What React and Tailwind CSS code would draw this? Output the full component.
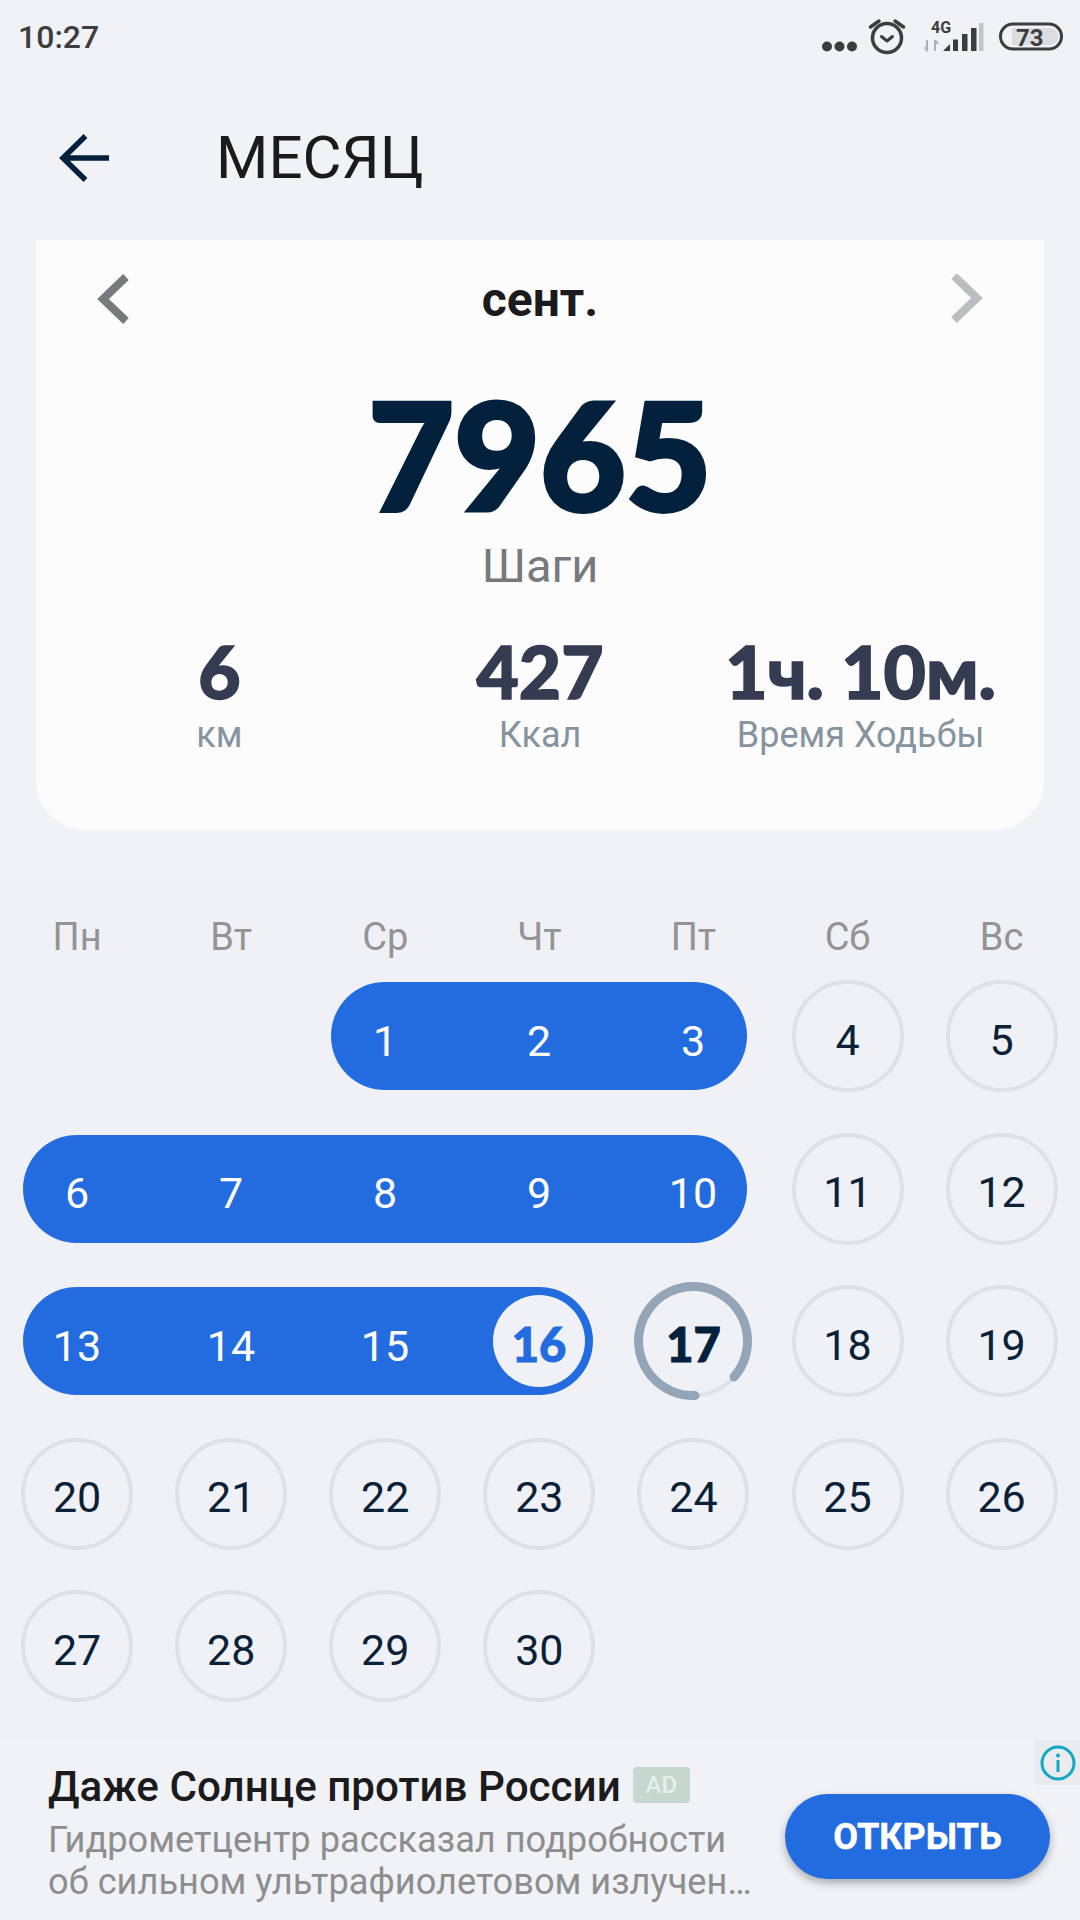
import React from "react";

function Day({ n }) {
  return (
    <div className="flex h-[152.5px] items-center justify-center">
      <div className="flex h-[112px] w-[112px] items-center justify-center rounded-full border-[4px] border-[#dfe1e6] pt-[7px] text-[43px] text-[#0b2138]">
        {n}
      </div>
    </div>
  );
}

function PillDay({ n }) {
  return <div className="flex w-[154px] shrink-0 items-center justify-center pt-[9px] text-[43px] leading-[50px] text-white">{n}</div>;
}

function Spacer() {
  return <div className="h-[152.5px]" />;
}

function PillRow({ span, width, days }) {
  return (
    <div className={"flex h-[152.5px] items-center " + span}>
      <div className={"ml-[23px] flex h-[108px] items-center justify-center rounded-full bg-[#226ce0] " + width}>
        {days.map((n) => (
          <PillDay key={n} n={n} />
        ))}
      </div>
    </div>
  );
}

function StatusIcons() {
  return (
    <svg width="280" height="72" viewBox="800 0 280 72" fill="none">
      <g fill="#3c3d3f">
        <circle cx="827" cy="45.500" r="5" />
        <circle cx="839.500" cy="45.500" r="5" />
        <circle cx="852" cy="45.500" r="5" />
      </g>
      <g stroke="#3c3d3f" fill="none" strokeLinecap="round" strokeLinejoin="round">
        <circle cx="887" cy="37" r="14.500" strokeWidth="3.500" />
        <path d="M881.500 35.500l5.500 4.500 5.500-4.500" strokeWidth="3" />
        <path d="M870.500 26l8.500-6M903.500 26l-8.500-6" strokeWidth="3.500" />
      </g>
      <text x="931" y="32" fontSize="16" fontWeight="700" fill="#3c3d3f" fontFamily="Roboto">4G</text>
      <path d="M927 39v11M925 46l2 4M935 50V39M935 39l3 4" stroke="#aeb0b3" strokeWidth="2" />
      <path d="M943 50l7-7v7z" fill="#3c3d3f" />
      <path d="M953 38.500h5V50h-5z" fill="#3c3d3f" />
      <path d="M962 33h5.500v17H962z" fill="#3c3d3f" />
      <path d="M971 27h5.500v23H971z" fill="#3c3d3f" />
      <path d="M979 22h4.500v28H979z" fill="#c2c4c6" />
      <path d="M1012 27h38a8.500 8.500 0 0 1 0 17h-38z" fill="#dcdde0" />
      <rect x="1000.500" y="23" width="61" height="25" rx="12.500" stroke="#3c3d3f" strokeWidth="3" fill="none" />
      <text x="1016" y="44.500" fontSize="24" fontWeight="700" fill="#3c3d3f" fontFamily="Roboto">73</text>
    </svg>
  );
}

export default function App() {
  return (
    <div className="flex h-[1920px] w-[1080px] flex-col overflow-hidden bg-[#f1f2f6] font-['Roboto',sans-serif]">
      <div className="flex h-[72px] shrink-0 items-center justify-between pl-[18px] pt-[2px]">
        <span className="text-[32px] font-medium text-[#3c3d3f]">10:27</span>
        <StatusIcons />
      </div>

      <div className="flex h-[168px] shrink-0 items-center pt-[4px]">
        <svg className="ml-[58px]" width="54" height="52" viewBox="0 0 54 52" fill="none">
          <path d="M51 26H6M27.500 4L5 26l22.500 22" stroke="#03203c" strokeWidth="5.500" />
        </svg>
        <h1 className="ml-[104px] text-[60px] font-normal leading-[64px] text-[#1b1b1d]">МЕСЯЦ</h1>
      </div>

      <div className="mx-[36px] h-[590px] shrink-0 rounded-b-[50px] bg-[#fcfcfc]">
        <div className="flex h-[118px] items-center justify-between pl-[60px] pr-[60px]">
          <svg width="34" height="50" viewBox="0 0 34 50" fill="none">
            <path d="M30 3L7 25l23 22" stroke="#77797c" strokeWidth="8" />
          </svg>
          <span className="pt-[2px] text-[48px] font-bold text-[#1b1b1d]">сент.</span>
          <svg width="34" height="50" viewBox="0 0 34 50" fill="none">
            <path d="M4 2l23 22L4 46" stroke="#bcbdc0" strokeWidth="8" />
          </svg>
        </div>
        <div className="mt-[24px] text-center font-['Lato',sans-serif] text-[148px] font-black leading-[144px] text-[#03203c] [-webkit-text-stroke:4px_#03203c]">
          7965
        </div>
        <div className="mt-[8px] text-center text-[47px] leading-[64px] text-[#77797c]">Шаги</div>
        <div className="mt-[31px] grid grid-cols-3 px-[23px] text-center">
          {[
            ["6", "км"],
            ["427", "Ккал"],
            ["1ч. 10м.", "Время Ходьбы"],
          ].map(([v, l]) => (
            <div key={l} className="flex flex-col items-center">
              <span className="whitespace-nowrap font-['Lato',sans-serif] text-[73px] font-black leading-[84px] text-[#353b51] [-webkit-text-stroke:1.5px_#353b51]">{v}</span>
              <span className="text-[36px] leading-[44px] text-[#86949f]">{l}</span>
            </div>
          ))}
        </div>
      </div>

      <div className="mt-[47px] shrink-0 bg-[#f0f1f6] pt-[37px]">
        <div className="grid grid-cols-[repeat(7,154.100px)]">
          {["Пн", "Вт", "Ср", "Чт", "Пт", "Сб", "Вс"].map((d) => (
            <div key={d} className="flex h-[46px] items-center justify-center text-[38px] text-[#929496]">
              {d}
            </div>
          ))}
        </div>
        <div className="grid h-[780px] auto-rows-[152.5px] grid-cols-[repeat(7,154.100px)]">
          <Spacer />
          <Spacer />
          <PillRow span="col-span-3" width="w-[416px]" days={[1, 2, 3]} />
          <Day n={4} />
          <Day n={5} />
          <PillRow span="col-span-5" width="w-[724px]" days={[6, 7, 8, 9, 10]} />
          <Day n={11} />
          <Day n={12} />
          <div className="col-span-4 flex h-[152.5px] items-center">
            <div className="ml-[23px] flex h-[108px] w-[570px] items-center rounded-full bg-[#226ce0]">
              <div className="ml-[-23px] flex items-center">
                <PillDay n={13} />
                <PillDay n={14} />
                <PillDay n={15} />
                <div className="ml-[31px] flex h-[92px] w-[92px] shrink-0 items-center justify-center rounded-full bg-[#f0f1f6] pt-[6px] font-['Lato',sans-serif] text-[47px] font-black text-[#226ce0] [-webkit-text-stroke:1px_#226ce0]">
                  16
                </div>
              </div>
            </div>
          </div>
          <div className="relative flex h-[152.5px] items-center justify-center">
            <svg className="absolute" width="122" height="122" viewBox="0 0 122 122" fill="none">
              <circle cx="61" cy="61" r="54.500" stroke="#e0e2e6" strokeWidth="4" />
              <path d="M 102 97 A 54.500 54.500 0 1 0 63 115.500" stroke="#94a5b7" strokeWidth="9" strokeLinecap="round" />
            </svg>
            <span className="pt-[6px] font-['Lato',sans-serif] text-[47px] font-black text-[#03203c] [-webkit-text-stroke:1px_#03203c]">17</span>
          </div>
          <Day n={18} />
          <Day n={19} />
          {[20, 21, 22, 23, 24, 25, 26, 27, 28, 29, 30].map((n) => (
            <Day key={n} n={n} />
          ))}
        </div>
      </div>

      <div className="relative flex-1 bg-[#f1f2f6]">
        <div className="absolute right-0 top-0 flex h-[45px] w-[45px] items-center justify-center bg-[#e9ebee]">
          <svg width="36" height="36" viewBox="0 0 36 36" fill="none">
            <circle cx="18" cy="18" r="16" stroke="#12a7c4" strokeWidth="3" />
            <circle cx="18" cy="10.500" r="2" fill="#12a7c4" />
            <path d="M18 15v12" stroke="#12a7c4" strokeWidth="3" />
          </svg>
        </div>
        <div className="flex">
          <div className="ml-[48px] w-[720px]">
            <div className="mt-[22px] flex items-center">
              <span className="whitespace-nowrap text-[42.200px] font-medium leading-[50px] text-[#1b1b1d]">Даже Солнце против России</span>
              <span className="mb-[4px] ml-[12px] flex h-[36px] w-[57px] items-center justify-center rounded-[4px] bg-[#c6d7d0] text-[24px] font-medium text-[#e6efeb]">AD</span>
            </div>
            <div className="mt-[7px] text-[36.200px] leading-[42px] text-[#8d8e90]">
              <div className="whitespace-nowrap">Гидрометцентр рассказал подробности</div>
              <div className="whitespace-nowrap">об сильном ультрафиолетовом излучен…</div>
            </div>
          </div>
          <div className="ml-[17px] mt-[54px] flex h-[85px] w-[265px] items-center justify-center rounded-full bg-[#226ce0] text-[36px] font-bold text-white shadow-[0_4px_8px_rgba(0,0,0,0.3)] [-webkit-text-stroke:0.5px_#ffffff]">
            ОТКРЫТЬ
          </div>
        </div>
      </div>
    </div>
  );
}
